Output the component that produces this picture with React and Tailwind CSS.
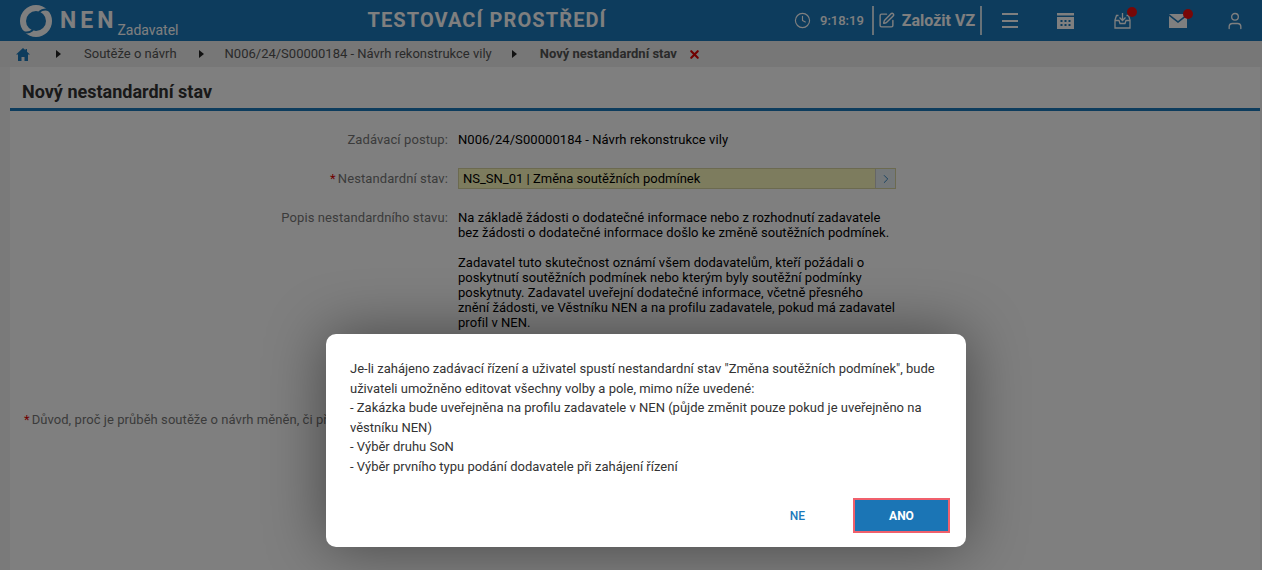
import React from 'react';
import { ChevronRight, Clock, SquarePen, User, X } from 'lucide-react';

const font = { fontFamily: 'Roboto, sans-serif' };

function Logo() {
  return (
    <svg width="34" height="34" viewBox="0 0 34 34" className="shrink-0">
      <circle cx="17" cy="17" r="16" fill="#fff" />
      <circle cx="17" cy="17" r="10" fill="#1b79bb" />
      <path d="M34 10 C30 5 25 4 20 8" fill="none" stroke="#1b79bb" strokeWidth="2" />
      <path d="M0 24 C4 29 9 30 14 26" fill="none" stroke="#1b79bb" strokeWidth="2" />
    </svg>
  );
}

function HomeIcon() {
  return (
    <svg width="14" height="13" viewBox="0 0 14 13" fill="#1b79bb" className="ml-[16px]">
      <path d="M7 0L0 6.5h2V13h3.5V9h3v4H12V6.5h2L11 3.7V1H9.5v1.3z" />
    </svg>
  );
}

function Calendar() {
  return (
    <svg width="17" height="16" viewBox="0 0 17 16" fill="#fff">
      <rect x="0" y="0" width="17" height="2.5" />
      <path d="M0 4h17v12H0z M3.5 7v2h2V7z M7.5 7v2h2V7z M11.5 7v2h2V7z M3.5 11v2h2v-2z M7.5 11v2h2v-2z M11.5 11v2h2v-2z" fillRule="evenodd" />
    </svg>
  );
}

function Inbox() {
  return (
    <svg width="17" height="17" viewBox="0 0 17 17" fill="none" stroke="#fff" strokeWidth="1.3">
      <path d="M8.5 1v7M5.5 5.5l3 3 3-3" />
      <path d="M4.5 3.5H2.5L1 8v8h15V8l-1.5-4.5h-2" />
      <path d="M1 8.5h4l1 3h5l1-3h4" />
    </svg>
  );
}

function Mail() {
  return (
    <svg width="18" height="14" viewBox="0 0 18 14" fill="#fff">
      <path d="M0 0h18L9 7z" />
      <path d="M0 2l9 7 9-7v12H0z" />
    </svg>
  );
}

function Burger() {
  return (
    <span className="flex w-[16px] flex-col gap-[4.5px]">
      <span className="h-[2px] bg-white" />
      <span className="h-[2px] bg-white" />
      <span className="h-[2px] bg-white" />
    </span>
  );
}

function Badge() {
  return <span className="absolute -right-[6px] -top-[5px] h-2.5 w-2.5 rounded-full bg-[#f00f0f]" />;
}

function Arrow() {
  return <span className="block h-0 w-0 border-y-[4px] border-l-[5px] border-y-transparent border-l-[#222]" />;
}

function Header() {
  return (
    <header className="flex h-[41px] items-center bg-[#1b79bb] text-white">
      <div className="flex w-[350px] items-center pl-[19px]">
        <Logo />
        <span className="ml-[7px] text-[23px] font-bold leading-none tracking-[4px]">NEN</span>
        <span className="ml-[0px] mt-[18px] text-[14px] leading-none">Zadavatel</span>
      </div>
      <div className="-mt-[2px] w-[274px] text-center text-[20px] font-bold tracking-[1.1px]">TESTOVACÍ PROSTŘEDÍ</div>
      <div className="ml-[170px] flex items-center">
        <Clock size={17} strokeWidth={1.6} />
        <span className="ml-[9px] text-[13px] font-medium">9:18:19</span>
        <span className="ml-[8px] flex h-[29px] items-center border-x-2 border-white/80 pl-[4px] pr-[5px]">
          <SquarePen size={17} strokeWidth={2} />
          <span className="ml-[7px] text-[16px] font-bold">Založit VZ</span>
        </span>
        <span className="ml-[20px]"><Burger /></span>
        <span className="ml-[39px] flex"><Calendar /></span>
        <span className="relative ml-[40px] flex"><Inbox /><Badge /></span>
        <span className="relative ml-[38px] flex"><Mail /><Badge /></span>
        <User size={20} strokeWidth={1.6} className="ml-[38px]" />
      </div>
    </header>
  );
}

function Breadcrumbs() {
  return (
    <nav className="flex h-[26px] items-center bg-[#eeeeee] text-[13px] text-[#555]">
      <HomeIcon />
      <span className="ml-[26px]"><Arrow /></span>
      <span className="ml-[23px]">Soutěže o návrh</span>
      <span className="ml-[22px]"><Arrow /></span>
      <span className="ml-[21px]">N006/24/S00000184 - Návrh rekonstrukce vily</span>
      <span className="ml-[20px]"><Arrow /></span>
      <span className="ml-[23px] font-bold">Nový nestandardní stav</span>
      <X size={13} strokeWidth={4} className="ml-[11px] text-[#e00000]" />
    </nav>
  );
}

function Row({ label, required, children, className = '' }) {
  return (
    <div className={`flex ${className}`}>
      <div className="w-[438px] whitespace-nowrap text-right text-[13px] tracking-[0.1px] text-[#777]">
        {required && <span className="mr-[2px] text-[#e00000]">*</span>}
        {label}
      </div>
      <div className="ml-[10px] text-[13px] text-[#111]">{children}</div>
    </div>
  );
}

function Form() {
  return (
    <main className="ml-[10px] mr-[2px] h-[503px] bg-white">
      <h1 className="flex h-[44px] items-end border-b-[3px] border-[#1b79bb] pb-[7px] pl-[12px] text-[18px] font-bold leading-none text-[#333]">
        Nový nestandardní stav
      </h1>
      <Row label="Zadávací postup:" className="mt-[20px] leading-[18px]">
        <span className="tracking-[0.07px] text-black">N006/24/S00000184 - Návrh rekonstrukce vily</span>
      </Row>
      <Row label="Nestandardní stav:" required className="mt-[19px] items-center leading-[18px]">
        <div className="flex h-[21px] w-[438px] border border-[#d8d5a0] bg-[#fbf8bd]">
          <span className="flex-1 pl-[4px] leading-[19px] text-black">NS_SN_01 | Změna soutěžních podmínek</span>
          <span className="flex w-[20px] items-center justify-center border-l border-[#ccc] bg-[#e9f0f5] text-[#1b79bb]">
            <ChevronRight size={14} strokeWidth={1.5} />
          </span>
        </div>
      </Row>
      <Row label="Popis nestandardního stavu:" className="mt-[21px] leading-[15px]">
        <div className="tracking-[0.05px] text-black">
          <p className="w-[440px]">
            Na základě žádosti o dodatečné informace nebo z rozhodnutí zadavatele<br />
            bez žádosti o dodatečné informace došlo ke změně soutěžních podmínek.
          </p>
          <p className="mt-[15px] w-[440px]">
            Zadavatel tuto skutečnost oznámí všem dodavatelům, kteří požádali o<br />
            poskytnutí soutěžních podmínek nebo kterým byly soutěžní podmínky<br />
            poskytnuty. Zadavatel uveřejní dodatečné informace, včetně přesného<br />
            znění žádosti, ve Věstníku NEN a na profilu zadavatele, pokud má zadavatel<br />
            profil v NEN.
          </p>
        </div>
      </Row>
      <div className="mt-[82px] pl-[14px] text-[13px] leading-[15px] tracking-[0.06px] text-[#777]">
        <span className="mr-[2px] text-[#e00000]">*</span>
        Důvod, proč je průběh soutěže o návrh měněn, či přerušen:
      </div>
    </main>
  );
}

function Dialog() {
  return (
    <div className="absolute inset-0 bg-black/50 pl-[326px] pt-[334px]">
      <div className="h-[213px] w-[640px] rounded-[10px] bg-white pl-[24px] pr-[16px] pt-[25px] shadow-[0_0_60px_rgba(0,0,0,0.45)]">
        <p className="text-[13px] leading-[19.5px] text-[#333]">
          Je-li zahájeno zadávací řízení a uživatel spustí nestandardní stav "Změna soutěžních podmínek", bude<br />
          uživateli umožněno editovat všechny volby a pole, mimo níže uvedené:<br />
          - Zakázka bude uveřejněna na profilu zadavatele v NEN (půjde změnit pouze pokud je uveřejněno na<br />
          věstníku NEN)<br />
          - Výběr druhu SoN<br />
          - Výběr prvního typu podání dodavatele při zahájení řízení
        </p>
        <div className="mt-[22px] flex items-center justify-end">
          <button className="mr-[48px] text-[12px] font-medium text-[#1b79bb]">NE</button>
          <button className="h-[35px] w-[97px] border-2 border-[#f0606c] bg-[#1b75b5] text-[12px] font-bold text-white">ANO</button>
        </div>
      </div>
    </div>
  );
}

export default function App() {
  return (
    <div style={font} className="relative h-[570px] w-[1262px] overflow-hidden bg-[#f5f5f5]">
      <Header />
      <Breadcrumbs />
      <Form />
      <Dialog />
    </div>
  );
}
